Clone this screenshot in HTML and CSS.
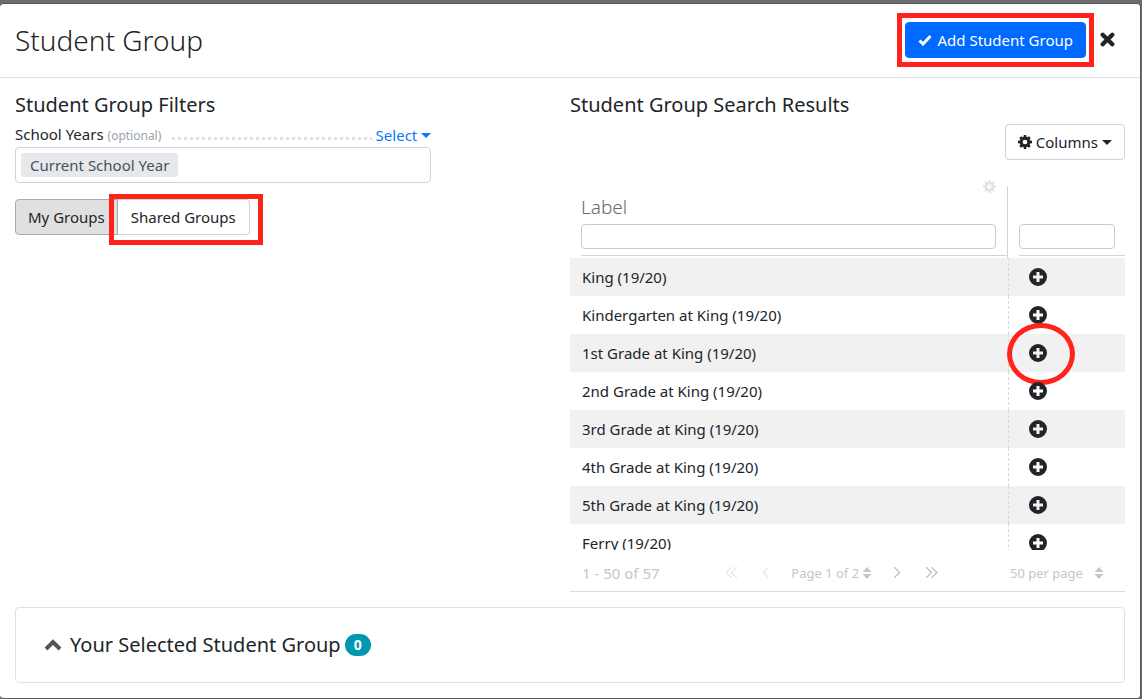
FILE: index.html
```html
<!DOCTYPE html>
<html lang="en">
  <head>
    <meta charset="UTF-8" />
    <meta name="viewport" content="width=device-width, initial-scale=1.0" />
    <title>Student Group</title>
    <link rel="stylesheet" href="styles.css">
  </head>
  <body>
    <svg class="sprite" aria-hidden="true">
      <symbol id="cog" viewBox="0 0 16 16">
        <path fill-rule="evenodd" d="M6.700 0h2.600l.4 2.100 1.100.5L12.600 1.400l1.900 1.900-1.200 1.800.5 1.100 2.200.5v2.600l-2.200.4-.5 1.100 1.200 1.800-1.900 1.900-1.800-1.200-1.100.5-.4 2.200H6.700l-.4-2.200-1.100-.5-1.800 1.200-1.900-1.900 1.200-1.800-.5-1.100L0 9.300V6.700l2.200-.5.5-1.100-1.200-1.800 1.900-1.900 1.800 1.200 1.100-.5zM8 5.300a2.700 2.700 0 1 0 0 5.400 2.700 2.700 0 0 0 0-5.400z" />
      </symbol>
      <symbol id="plus" viewBox="0 0 18 18">
        <path fill-rule="evenodd" d="M9 0a9 9 0 1 1 0 18A9 9 0 0 1 9 0zM7.500 4v3.500H4v3h3.500V14h3v-3.500H14v-3h-3.500V4z" />
      </symbol>
      <symbol id="sort" viewBox="0 0 10 14">
        <path d="M5 1l4.500 5h-9zM5 13L.5 8h9z" />
      </symbol>
    </svg>

    <main class="modal">
      <header class="modal-header">
        <h1 class="title">Student Group</h1>
        <div class="actions">
          <div class="marked">
            <button class="btn btn-primary">
              <svg class="check" viewBox="0 0 14 12"><path d="M1.500 6.500l3.500 3.500L12.500 2" /></svg>
              Add Student Group
            </button>
            <span class="mark mark-add"></span>
          </div>
          <button class="close" aria-label="Close">
            <svg viewBox="0 0 14 14"><path d="M2.500 2.500l9 9M11.500 2.500l-9 9" /></svg>
          </button>
        </div>
      </header>

      <div class="columns">
        <section class="filters">
          <h2 class="heading">Student Group Filters</h2>
          <div class="label-row">
            <label for="years">School Years <small class="optional">(optional)</small></label>
            <span class="dots"></span>
            <button class="link">Select <span class="caret"></span></button>
          </div>
          <div class="tag-box">
            <span class="tag">Current School Year</span>
            <input class="tag-input" id="years" type="text" />
          </div>
          <div class="btn-group">
            <button class="btn btn-left active">My Groups</button>
            <div class="marked">
              <button class="btn btn-right">Shared Groups</button>
              <span class="mark mark-shared"></span>
            </div>
          </div>
        </section>

        <section class="results">
          <h2 class="heading">Student Group Search Results</h2>
          <div class="toolbar">
            <button class="btn">
              <svg class="cog"><use href="#cog" /></svg>
              Columns <span class="caret"></span>
            </button>
          </div>
          <div class="table-wrap">
            <table class="table">
              <thead>
                <tr>
                  <th class="col-label">
                    <div class="head">
                      <svg class="head-cog"><use href="#cog" /></svg>
                      <label for="label-filter">Label</label>
                      <input class="filter" id="label-filter" type="text" />
                    </div>
                  </th>
                  <th class="col-add">
                    <div class="head">
                      <input class="filter" type="text" aria-label="Filter" />
                    </div>
                  </th>
                </tr>
              </thead>
              <tbody>
                <tr>
                  <td>King (19/20)</td>
                  <td><button class="add" aria-label="Add"><svg><use href="#plus" /></svg></button></td>
                </tr>
                <tr>
                  <td>Kindergarten at King (19/20)</td>
                  <td><button class="add" aria-label="Add"><svg><use href="#plus" /></svg></button></td>
                </tr>
                <tr>
                  <td>1st Grade at King (19/20)</td>
                  <td>
                    <button class="add" aria-label="Add"><svg><use href="#plus" /></svg><span class="circle"></span></button>
                  </td>
                </tr>
                <tr>
                  <td>2nd Grade at King (19/20)</td>
                  <td><button class="add" aria-label="Add"><svg><use href="#plus" /></svg></button></td>
                </tr>
                <tr>
                  <td>3rd Grade at King (19/20)</td>
                  <td><button class="add" aria-label="Add"><svg><use href="#plus" /></svg></button></td>
                </tr>
                <tr>
                  <td>4th Grade at King (19/20)</td>
                  <td><button class="add" aria-label="Add"><svg><use href="#plus" /></svg></button></td>
                </tr>
                <tr>
                  <td>5th Grade at King (19/20)</td>
                  <td><button class="add" aria-label="Add"><svg><use href="#plus" /></svg></button></td>
                </tr>
                <tr>
                  <td>Ferry (19/20)</td>
                  <td><button class="add" aria-label="Add"><svg><use href="#plus" /></svg></button></td>
                </tr>
              </tbody>
            </table>
          </div>
          <div class="pager">
            <span class="count">1 - 50 of 57</span>
            <div class="pages">
              <button class="page-btn" disabled aria-label="First page">
                <svg viewBox="0 0 12 12"><path d="M6 1L1 6l5 5M11 1L6 6l5 5" /></svg>
              </button>
              <button class="page-btn" disabled aria-label="Previous page">
                <svg viewBox="0 0 12 12"><path d="M9 1L4 6l5 5" /></svg>
              </button>
              <label class="picker">
                <select aria-label="Page"><option>Page 1 of 2</option></select>
                <svg class="sort"><use href="#sort" /></svg>
              </label>
              <button class="page-btn" aria-label="Next page">
                <svg viewBox="0 0 12 12"><path d="M3 1l5 5-5 5" /></svg>
              </button>
              <button class="page-btn" aria-label="Last page">
                <svg viewBox="0 0 12 12"><path d="M1 1l5 5-5 5M6 1l5 5-5 5" /></svg>
              </button>
            </div>
            <label class="picker per-page">
              <select aria-label="Rows per page"><option>50 per page</option></select>
              <svg class="sort"><use href="#sort" /></svg>
            </label>
          </div>
        </section>
      </div>

      <section class="selected">
        <svg class="chevron" viewBox="0 0 18 12"><path d="M2 10l7-7 7 7" /></svg>
        <h2 class="heading">Your Selected Student Group</h2>
        <span class="badge">0</span>
      </section>
    </main>
  </body>
</html>
```
FILE: styles.css
```css
* {
  box-sizing: border-box;
}
body {
  margin: 0;
  padding: 3px 1px 1px 0;
  background-color: #6c6c6c;
  color: #212529;
  font-family: "Noto Sans", "Open Sans", sans-serif;
  font-size: 15px;
  line-height: 22px;
}
button,
input,
select {
  font: inherit;
  color: inherit;
}
button {
  cursor: pointer;
}
.sprite {
  display: none;
}
.modal {
  background-color: #fff;
  border: 1px solid #5a5a5a;
  border-left: 0;
  border-radius: 4px;
}
.modal-header {
  display: flex;
  justify-content: space-between;
  align-items: center;
  height: 74px;
  padding: 0 25px 2px 15px;
  border-bottom: 1px solid #dee2e6;
}
.title {
  margin: 0;
  font-size: 28px;
  font-weight: 300;
  line-height: 36px;
}
.actions {
  display: flex;
  align-items: center;
  gap: 14px;
}
.btn {
  display: flex;
  align-items: center;
  gap: 5px;
  height: 36px;
  padding: 0 12px;
  background-color: #fff;
  border: 1px solid #ced4da;
  border-radius: 4px;
}
.btn-primary {
  background-color: #0069ff;
  border-color: #0069ff;
  color: #fff;
}
.check {
  width: 14px;
  height: 12px;
  fill: none;
  stroke: #fff;
  stroke-width: 3;
}
.close {
  display: flex;
  padding: 0;
  background: none;
  border: 0;
}
.close svg {
  width: 15px;
  height: 15px;
  stroke: #212529;
  stroke-width: 4;
  stroke-linecap: round;
}

/* red highlights */
.marked {
  position: relative;
}
.mark {
  position: absolute;
  border: 5px solid #ff231c;
  pointer-events: none;
}
.mark-add {
  inset: -9px -8px;
}
.mark-shared {
  inset: -5px -13px -10px -9px;
}
.circle {
  position: absolute;
  top: -21px;
  left: -22px;
  width: 68px;
  height: 62px;
  border: 5px solid #ff231c;
  border-radius: 50%;
  pointer-events: none;
}

.columns {
  display: grid;
  grid-template-columns: 1fr 1fr;
  padding: 15px 15px 0;
}
.heading {
  margin: 0;
  font-size: 20px;
  font-weight: 400;
  line-height: 24px;
}
.filters {
  width: 75%;
}
.label-row {
  display: flex;
  align-items: center;
  height: 22px;
  margin-top: 7px;
}
.optional {
  color: #9aa3ac;
  font-size: 12px;
}
.dots {
  flex: 1;
  height: 3px;
  margin: 6px 4px 0 11px;
  background: repeating-linear-gradient(to right, #dee0e3 0 3px, transparent 3px 6px);
}
.link {
  display: flex;
  align-items: center;
  gap: 4px;
  padding: 0;
  background: none;
  border: 0;
  color: #0a78ff;
}
.caret {
  border: 5px solid transparent;
  border-top-color: currentColor;
  border-bottom: 0;
}
.tag-box {
  display: flex;
  align-items: center;
  height: 36px;
  margin-top: 1px;
  padding: 0 5px;
  border: 1px solid #ced4da;
  border-radius: 4px;
}
.tag {
  padding: 1px 9px;
  background-color: #e5e9ec;
  border-radius: 3px;
  color: #495057;
}
.tag-input {
  flex: 1;
  min-width: 0;
  border: 0;
  outline: 0;
}
.btn-group {
  display: flex;
  margin-top: 16px;
}
.btn-left {
  border-radius: 4px 0 0 4px;
}
.btn-right {
  padding: 0 13px;
  border-left: 0;
  border-radius: 0 4px 4px 0;
}
.active {
  background-color: #e0e0e0;
  border-color: #a4adb6;
}

.toolbar {
  display: flex;
  justify-content: flex-end;
  margin: 7px 0 20px;
}
.toolbar .btn {
  gap: 4px;
}
.cog {
  width: 14px;
  height: 14px;
  fill: #212529;
}
.table-wrap {
  max-height: 370px;
  overflow: hidden;
}
.table {
  width: 100%;
  border-collapse: collapse;
  table-layout: fixed;
}
.table th {
  padding: 0 0 2px;
  font-weight: 300;
  text-align: left;
  vertical-align: bottom;
}
.col-add {
  width: 21%;
}
.head {
  display: flex;
  flex-direction: column;
  justify-content: flex-end;
  height: 76px;
  padding: 0 12px 6px 0;
  margin-left: 11px;
  border-bottom: 1px solid #ced4da;
  color: #5f6b76;
  font-size: 19px;
}
.col-label {
  background: linear-gradient(#ced4da, #ced4da) right bottom / 1px 72px no-repeat;
}
.col-add .head {
  padding-right: 10px;
}
.head-cog {
  flex: none;
  align-self: flex-end;
  width: 13px;
  height: 13px;
  margin-bottom: 3px;
  fill: #e1e4e7;
}
.filter {
  width: 100%;
  height: 25px;
  margin-top: 6px;
  border: 1px solid #c5ccd3;
  border-radius: 4px;
}
.table td {
  height: 38px;
  padding: 0 12px;
}
.table td:last-child {
  padding-left: 20px;
  border-left: 1px dashed #d5dade;
}
.table tbody tr:nth-child(odd) {
  background-color: #f1f1f1;
}
.add {
  position: relative;
  display: block;
  padding: 0;
  background: none;
  border: 0;
}
.add svg {
  display: block;
  width: 18px;
  height: 18px;
  fill: #212529;
}

.pager {
  display: flex;
  justify-content: space-between;
  align-items: center;
  height: 42px;
  padding: 4px 21px 0 12px;
  border-bottom: 1px solid #d9dcdf;
  color: #c4c6c8;
}
.pages {
  display: flex;
  align-items: center;
  gap: 17px;
  padding-right: 6px;
}
.page-btn {
  display: flex;
  padding: 2px;
  background: none;
  border: 0;
}
.page-btn svg {
  width: 13px;
  height: 13px;
  fill: none;
  stroke: #b5b8bb;
}
.page-btn:disabled svg {
  stroke: #e2e4e6;
}
.picker {
  display: flex;
  align-items: center;
  gap: 3px;
  font-size: 13px;
}
.picker select {
  padding: 0;
  appearance: none;
  background: none;
  border: 0;
}
.per-page {
  gap: 11px;
}
.sort {
  width: 10px;
  height: 14px;
  fill: #c4c6c8;
}

.selected {
  display: flex;
  align-items: center;
  height: 76px;
  margin: 15px;
  padding: 0 28px;
  border: 1px solid #dee2e6;
  border-radius: 4px;
}
.chevron {
  width: 18px;
  height: 12px;
  margin-right: 8px;
  fill: none;
  stroke: #555;
  stroke-width: 4;
}
.badge {
  margin-left: 4px;
  padding: 0 9px;
  background-color: #0097b0;
  border-radius: 11px;
  color: #fff;
  font-weight: 700;
  font-size: 14px;
}
```
